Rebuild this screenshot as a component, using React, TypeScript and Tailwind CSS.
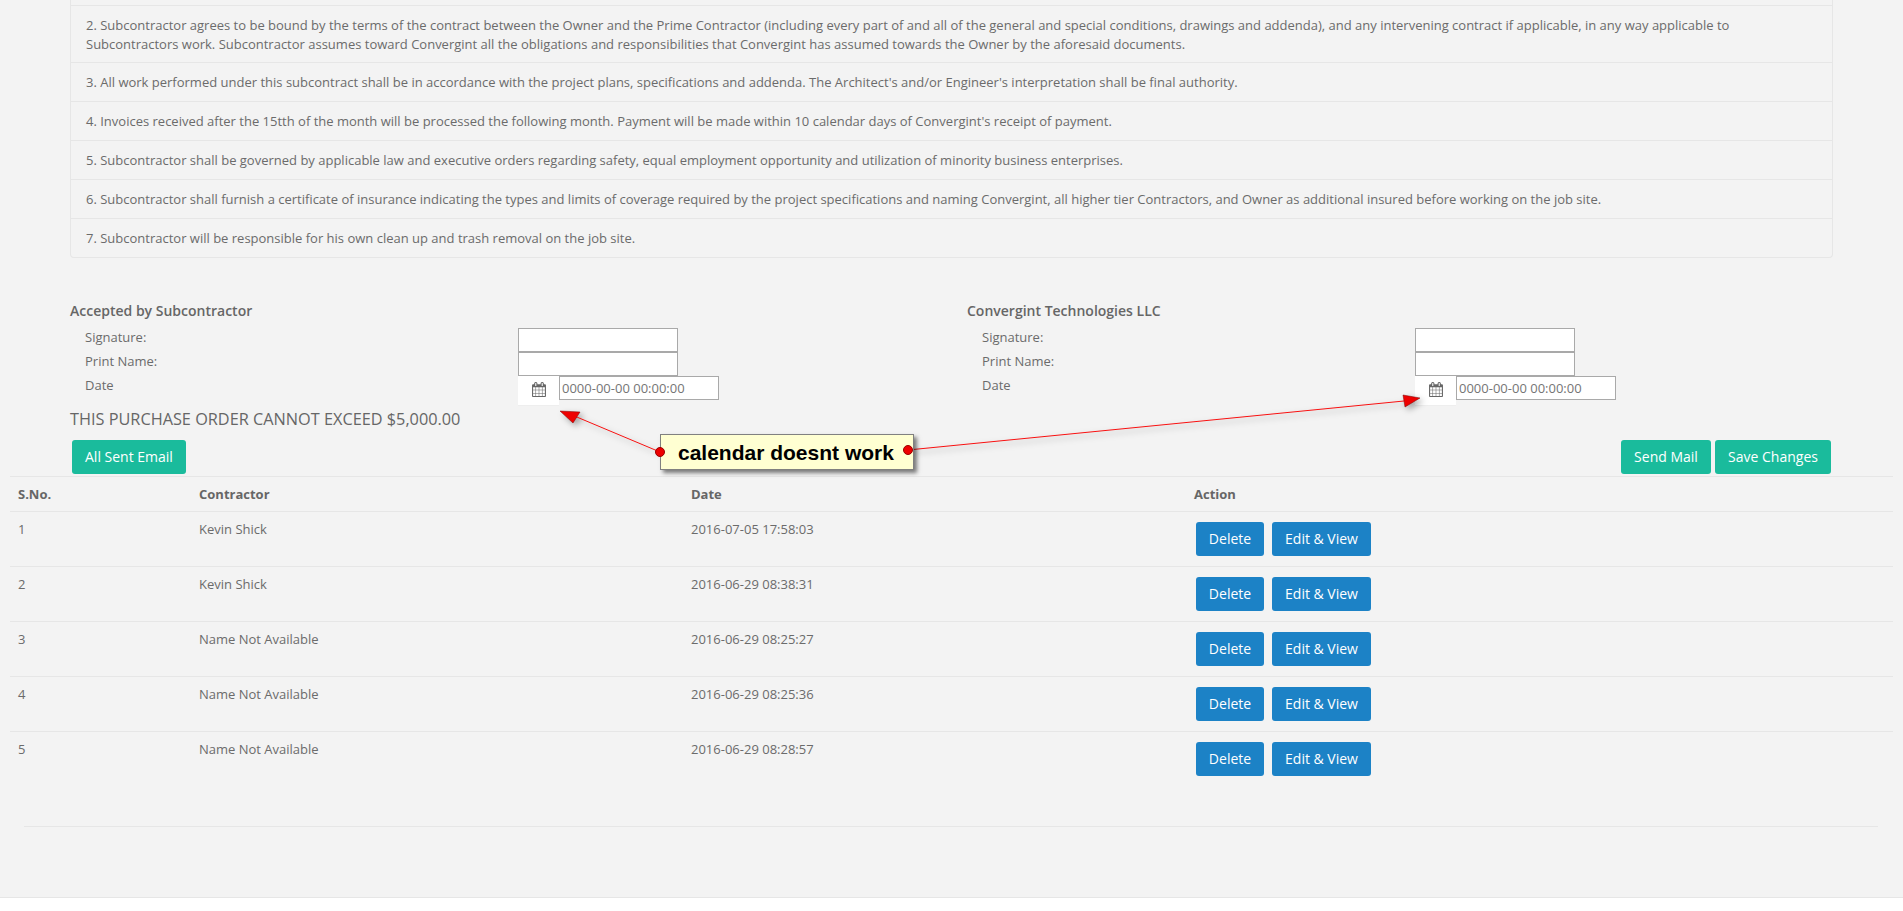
const terms = [
  "2. Subcontractor agrees to be bound by the terms of the contract between the Owner and the Prime Contractor (including every part of and all of the general and special conditions, drawings and addenda), and any intervening contract if applicable, in any way applicable to Subcontractors work. Subcontractor assumes toward Convergint all the obligations and responsibilities that Convergint has assumed towards the Owner by the aforesaid documents.",
  "3. All work performed under this subcontract shall be in accordance with the project plans, specifications and addenda. The Architect's and/or Engineer's interpretation shall be final authority.",
  "4. Invoices received after the 15tth of the month will be processed the following month. Payment will be made within 10 calendar days of Convergint's receipt of payment.",
  "5. Subcontractor shall be governed by applicable law and executive orders regarding safety, equal employment opportunity and utilization of minority business enterprises.",
  "6. Subcontractor shall furnish a certificate of insurance indicating the types and limits of coverage required by the project specifications and naming Convergint, all higher tier Contractors, and Owner as additional insured before working on the job site.",
  "7. Subcontractor will be responsible for his own clean up and trash removal on the job site.",
];

const rows = [
  { no: 1, name: "Kevin Shick", date: "2016-07-05 17:58:03" },
  { no: 2, name: "Kevin Shick", date: "2016-06-29 08:38:31" },
  { no: 3, name: "Name Not Available", date: "2016-06-29 08:25:27" },
  { no: 4, name: "Name Not Available", date: "2016-06-29 08:25:36" },
  { no: 5, name: "Name Not Available", date: "2016-06-29 08:28:57" },
];

function CalendarIcon() {
  return (
    <svg viewBox="0 0 1664 1792" className="w-[14px] h-[15px] ml-px fill-[#666]">
      <path d="M128 1664h288v-288h-288v288zm352 0h320v-288h-320v288zm-352-352h288v-320h-288v320zm352 0h320v-320h-320v320zm-352-384h288v-288h-288v288zm736 736h320v-288h-320v288zm-384-736h320v-288h-320v288zm768 736h288v-288h-288v288zm-384-352h320v-320h-320v320zm-352-864v-288q0-13-9.5-22.5t-22.5-9.5h-64q-13 0-22.5 9.5t-9.5 22.5v288q0 13 9.5 22.5t22.5 9.5h64q13 0 22.5-9.5t9.5-22.5zm736 864h288v-320h-288v320zm-384-384h320v-288h-320v288zm384 0h288v-288h-288v288zm32-480v-288q0-13-9.5-22.5t-22.5-9.5h-64q-13 0-22.5 9.5t-9.5 22.5v288q0 13 9.5 22.5t22.5 9.5h64q13 0 22.5-9.5t9.5-22.5zm384-64v1280q0 52-38 90t-90 38h-1408q-52 0-90-38t-38-90v-1280q0-52 38-90t90-38h128v-96q0-66 47-113t113-47h64q66 0 113 47t47 113v96h384v-96q0-66 47-113t113-47h64q66 0 113 47t47 113v96h128q52 0 90 38t38 90z" />
    </svg>
  );
}

function SignBlock({ title }: { title: string }) {
  return (
    <div className="w-[897px] shrink-0">
      <h4 className="h-5 mb-[7px] text-sm leading-5 font-semibold text-[#666666]">{title}</h4>
      <div className="flex h-6">
        <span className="w-[448px] pl-[15px] leading-[18px]">Signature:</span>
        <input className="w-40 h-6 bg-white border border-[#a9a9a9]" />
      </div>
      <div className="flex h-6">
        <span className="w-[448px] pl-[15px] leading-[18px]">Print Name:</span>
        <input className="w-40 h-6 bg-white border border-[#a9a9a9]" />
      </div>
      <div className="flex h-6">
        <span className="w-[448px] pl-[15px] leading-[18px]">Date</span>
        <div className="w-[41px] h-[30px] flex items-center justify-center bg-white border-b border-[#eeeeee] pb-[2px] shrink-0">
          <CalendarIcon />
        </div>
        <input
          readOnly
          value="0000-00-00 00:00:00"
          className="w-40 h-6 bg-white border border-[#a9a9a9] px-[2px] text-[13px] text-[#757575]"
        />
      </div>
    </div>
  );
}

function Annotation() {
  return (
    <>
      <svg className="absolute inset-0 w-[1903px] h-[911px] pointer-events-none drop-shadow-[3px_3px_3px_rgba(0,0,0,0.35)]" viewBox="0 0 1903 911">
        <line x1="660" y1="452" x2="572" y2="415" stroke="#f81010" strokeWidth="1" />
        <line x1="908" y1="450" x2="1404" y2="401" stroke="#f81010" strokeWidth="1" />
        <polygon points="560,411 580,412 573,423" fill="#ee0000" stroke="#7a0000" strokeWidth="0.5" />
        <polygon points="1420,398 1403,395 1405,407" fill="#ee0000" stroke="#7a0000" strokeWidth="0.5" />
      </svg>
      <div className="absolute left-[660px] top-[434px] w-[254px] h-[36px] flex items-center pl-[17px] bg-[#ffffd2] border border-[#808080] shadow-[3px_3px_4px_rgba(0,0,0,0.5)] font-['Liberation_Sans',Arial,sans-serif] font-bold text-[21px] text-black">
        calendar doesnt work
      </div>
      <div className="absolute left-[655px] top-[447px] w-[10px] h-[10px] rounded-full bg-[#ee0000] border border-[#990000]" />
      <div className="absolute left-[903px] top-[445px] w-[10px] h-[10px] rounded-full bg-[#ee0000] border border-[#990000]" />
    </>
  );
}

export default function App() {
  return (
    <div className="relative h-[911px] overflow-hidden flex flex-col bg-[#f3f3f3] text-[#6b6b6b] text-[13px] leading-[19px] font-['Open_Sans',sans-serif]">
      <div className="mx-[70px]">
        <div className="h-[6px] border-x border-b border-[#e6e6e6]" />
        {terms.map((t, i) => (
          <div
            key={i}
            className={
              i === 0
                ? "pt-[10px] pb-[8px] px-[15px] border-x border-b border-[#e6e6e6]"
                : i === terms.length - 1
                  ? "pt-[10px] pb-[9px] px-[15px] border-x border-b border-[#e6e6e6] rounded-b"
                  : "pt-[10px] pb-[9px] px-[15px] border-x border-b border-[#e6e6e6]"
            }
          >
            {t}
          </div>
        ))}
      </div>

      <div className="mt-[43px] mx-[70px] flex">
        <SignBlock title="Accepted by Subcontractor" />
        <SignBlock title="Convergint Technologies LLC" />
      </div>

      <h3 className="mt-2 mx-[70px] h-[22px] text-[16.3px] leading-[22px] font-medium text-[#666666]">
        THIS PURCHASE ORDER CANNOT EXCEED $5,000.00
      </h3>

      <div className="mt-[10px] pl-[72px] pr-[72px] flex text-sm">
        <button className="h-[34px] px-[13px] rounded-[3px] bg-[#1abb9c] text-white">All Sent Email</button>
        <div className="ml-auto flex gap-1">
          <button className="h-[34px] w-[90px] rounded-[3px] bg-[#1abb9c] text-white">Send Mail</button>
          <button className="h-[34px] w-[116px] rounded-[3px] bg-[#1abb9c] text-white">Save Changes</button>
        </div>
      </div>

      <table className="mt-[2px] mx-[10px] w-[1883px] table-fixed border-separate border-spacing-0">
        <thead>
          <tr className="text-left text-[#666666]">
            <th className="w-[181px] h-[36px] px-2 border-y border-[#e6e6e6] font-bold">S.No.</th>
            <th className="w-[492px] h-[36px] px-2 border-y border-[#e6e6e6] font-bold">Contractor</th>
            <th className="w-[503px] h-[36px] px-2 border-y border-[#e6e6e6] font-bold">Date</th>
            <th className="h-[36px] px-2 border-y border-[#e6e6e6] font-bold">Action</th>
          </tr>
        </thead>
        <tbody>
          {rows.map((r, i) => {
            const cell = i === rows.length - 1 ? "p-2 align-top" : "p-2 align-top border-b border-[#e6e6e6]";
            return (
              <tr key={r.no}>
                <td className={cell}>{r.no}</td>
                <td className={cell}>{r.name}</td>
                <td className={cell}>{r.date}</td>
                <td className={cell}>
                  <div className="flex gap-2 ml-[2px] my-[2px] text-sm">
                    <button className="h-[34px] w-[68px] rounded-[3px] bg-[#1c82c6] text-white">Delete</button>
                    <button className="h-[34px] w-[99px] rounded-[3px] bg-[#1c82c6] text-white">Edit &amp; View</button>
                  </div>
                </td>
              </tr>
            );
          })}
        </tbody>
      </table>

      <hr className="mt-10 ml-6 mr-[25px] border-[#e6e6e6]" />

      <div className="mt-auto h-[14px] bg-white border-t border-[#e6e6e6]" />

      <Annotation />
    </div>
  );
}
